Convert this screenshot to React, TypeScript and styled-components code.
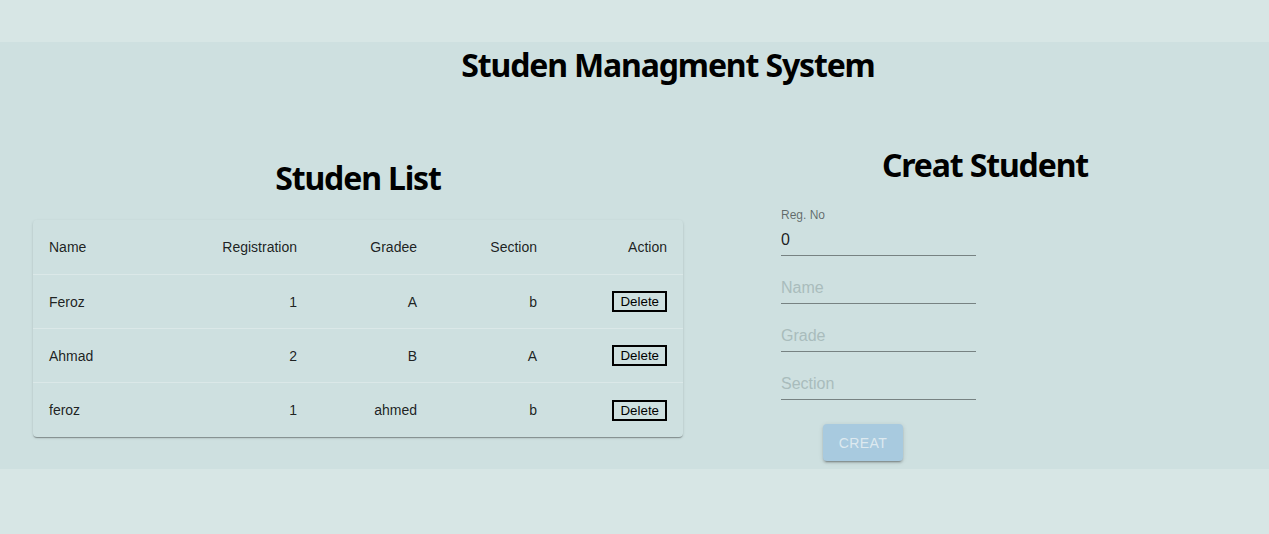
import React from "react";
import styled, { createGlobalStyle } from "styled-components";

const GlobalStyle = createGlobalStyle`
  html, body {
    margin: 0;
    padding: 0;
    background: #d7e6e5;
  }
  body {
    padding-top: 42px;
    font-family: "Liberation Sans", Arial, sans-serif;
  }
  * { box-sizing: border-box; }
`;

const Main = styled.main`
  background: #cee0e0;
  padding: 3px 0 8px;
`;

const Title = styled.h1`
  margin: 0;
  padding-left: 67px;
  text-align: center;
  font-family: "Noto Sans", "Open Sans", sans-serif;
  font-weight: 700;
  font-size: 32px;
  line-height: 40px;
  letter-spacing: -1.15px;
  color: #000;
`;

const Columns = styled.div`
  display: flex;
  align-items: flex-start;
`;

const LeftColumn = styled.section`
  width: 701px;
  padding: 73px 18px 0 33px;
`;

const RightColumn = styled.section`
  flex: 1;
  padding-top: 60px;
`;

const SectionHeading = styled.h2`
  margin: 0 0 22px;
  text-align: center;
  font-family: "Noto Sans", "Open Sans", sans-serif;
  font-weight: 700;
  font-size: 32px;
  line-height: 40px;
  letter-spacing: -1.15px;
  color: #000;
`;

const Card = styled.div`
  border-radius: 4px;
  background: transparent;
  box-shadow: 0px 2px 1px -1px rgba(0, 0, 0, 0.2),
    0px 1px 1px 0px rgba(0, 0, 0, 0.14), 0px 1px 3px 0px rgba(0, 0, 0, 0.12);
`;

const Row = styled.div<{ $header?: boolean; $last?: boolean }>`
  display: grid;
  grid-template-columns: 160px 120px 120px 120px 130px;
  align-items: center;
  height: ${(p) => (p.$header ? 55 : 54)}px;
  border-bottom: ${(p) => (p.$last ? "none" : "1px solid rgba(255, 255, 255, 0.28)")};
  font-size: 14px;
  line-height: 20px;
  color: rgba(0, 0, 0, 0.87);
`;

const Cell = styled.div<{ $align?: "left" | "right" }>`
  padding: 0 16px;
  text-align: ${(p) => p.$align ?? "right"};
`;

const DeleteButton = styled.button`
  font-family: "Liberation Sans", Arial, sans-serif;
  font-size: 13.33px;
  line-height: 15px;
  padding: 1px 6px;
  border: 2px solid #000;
  background: transparent;
  color: #000;
  border-radius: 0;
  cursor: pointer;
`;

const Form = styled.form`
  display: flex;
  flex-direction: column;
  align-items: flex-start;
  margin-left: 80px;
  padding-top: 1px;
  width: 195px;
`;

const Field = styled.label`
  position: relative;
  display: block;
  width: 195px;
  height: 48px;
  padding-top: 16px;
`;

const FloatingLabel = styled.span`
  position: absolute;
  left: 0;
  top: 0;
  font-size: 12px;
  line-height: 14px;
  color: rgba(0, 0, 0, 0.54);
`;

const Input = styled.input`
  display: block;
  width: 100%;
  height: 32px;
  padding: 5px 0 4px;
  border: none;
  border-bottom: 1px solid rgba(0, 0, 0, 0.42);
  background: transparent;
  font-family: "Liberation Sans", Arial, sans-serif;
  font-size: 16px;
  line-height: 22px;
  color: rgba(0, 0, 0, 0.87);
  outline: none;
  &::placeholder {
    color: #a9bcbc;
    opacity: 1;
  }
`;

const CreateButton = styled.button`
  margin: 24px 0 0 42px;
  width: 80px;
  height: 37px;
  border: none;
  border-radius: 4px;
  background: #a8cadf;
  color: #dde9ef;
  font-family: "Liberation Sans", Arial, sans-serif;
  font-size: 14px;
  letter-spacing: 0.4px;
  text-transform: uppercase;
  box-shadow: 0px 3px 1px -2px rgba(0, 0, 0, 0.2),
    0px 2px 2px 0px rgba(0, 0, 0, 0.14), 0px 1px 5px 0px rgba(0, 0, 0, 0.12);
`;

const students = [
  { name: "Feroz", reg: "1", grade: "A", section: "b" },
  { name: "Ahmad", reg: "2", grade: "B", section: "A" },
  { name: "feroz", reg: "1", grade: "ahmed", section: "b" },
];

export default function App() {
  return (
    <>
      <GlobalStyle />
      <Main>
        <Title>Studen Managment System</Title>
        <Columns>
          <LeftColumn>
            <SectionHeading>Studen List</SectionHeading>
            <Card>
              <Row $header>
                <Cell $align="left">Name</Cell>
                <Cell>Registration</Cell>
                <Cell>Gradee</Cell>
                <Cell>Section</Cell>
                <Cell>Action</Cell>
              </Row>
              {students.map((s, i) => (
                <Row key={i} $last={i === students.length - 1}>
                  <Cell $align="left">{s.name}</Cell>
                  <Cell>{s.reg}</Cell>
                  <Cell>{s.grade}</Cell>
                  <Cell>{s.section}</Cell>
                  <Cell>
                    <DeleteButton type="button">Delete</DeleteButton>
                  </Cell>
                </Row>
              ))}
            </Card>
          </LeftColumn>
          <RightColumn>
            <SectionHeading>Creat Student</SectionHeading>
            <Form onSubmit={(e) => e.preventDefault()}>
              <Field>
                <FloatingLabel>Reg. No</FloatingLabel>
                <Input type="text" defaultValue="0" />
              </Field>
              <Field>
                <Input type="text" placeholder="Name" />
              </Field>
              <Field>
                <Input type="text" placeholder="Grade" />
              </Field>
              <Field>
                <Input type="text" placeholder="Section" />
              </Field>
              <CreateButton type="submit">Creat</CreateButton>
            </Form>
          </RightColumn>
        </Columns>
      </Main>
    </>
  );
}
